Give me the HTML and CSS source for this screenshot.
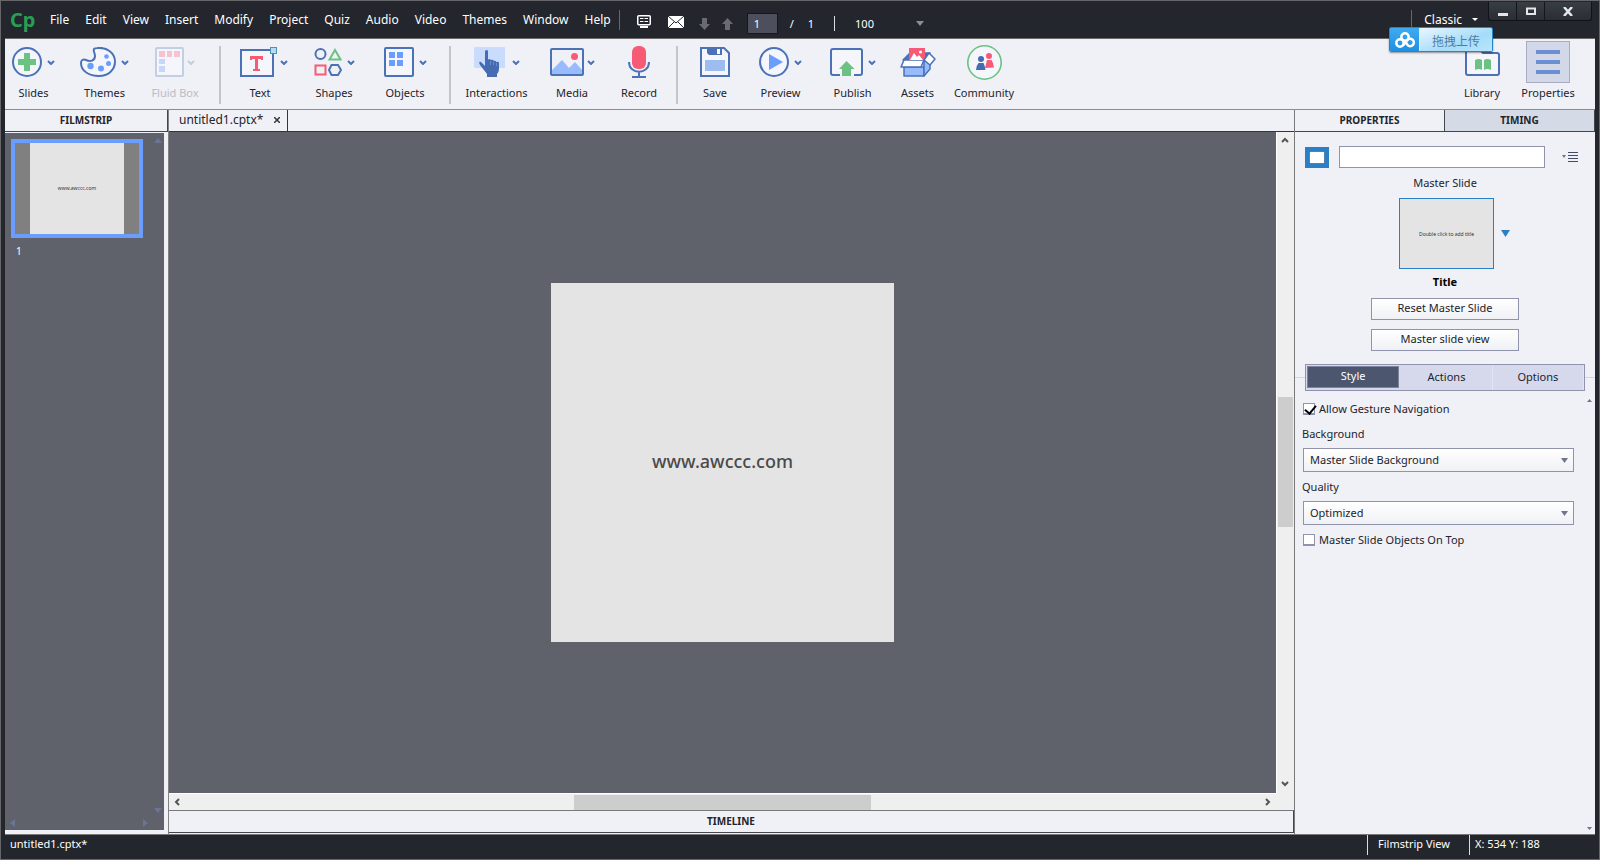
FILE: index.html
```
<!DOCTYPE html>
<html lang="en">
<head>
    <meta charset="UTF-8">
    <meta name="viewport" content="width=device-width, initial-scale=1.0">
    <title>untitled1.cptx</title>
    <link rel="stylesheet" href="styles.css">
</head>
<body>
    <header class="titlebar">
        <span class="logo">Cp</span>
        <nav class="menu">
            <button>File</button>
            <button>Edit</button>
            <button>View</button>
            <button>Insert</button>
            <button>Modify</button>
            <button>Project</button>
            <button>Quiz</button>
            <button>Audio</button>
            <button>Video</button>
            <button>Themes</button>
            <button>Window</button>
            <button>Help</button>
        </nav>
        <span class="bar-line"></span>
        <div class="quick">
            <button class="icon-btn" aria-label="Notes">
                <svg width="14" height="13" viewBox="0 0 14 13"><rect x=".75" y=".75" width="12.500" height="9" rx="1" fill="none" stroke="#fff" stroke-width="1.500"/><path d="M3 3.500h3.500M3 6.500h3.500M7.500 3.500H11M7.500 6.500H11" stroke="#fff"/><path d="M3 11h8v2H3z" fill="#fff"/></svg>
            </button>
            <button class="icon-btn" aria-label="Mail">
                <svg width="16" height="12" viewBox="0 0 16 12"><rect width="16" height="12" fill="#fff"/><path d="M0 0l8 7 8-7M0 12l6-6M16 12l-6-6" fill="none" stroke="#23262d"/></svg>
            </button>
        </div>
        <div class="pager">
            <button class="icon-btn" aria-label="Next slide">
                <svg width="11" height="12" viewBox="0 0 11 12"><path d="M3 0h5v6h3l-5.500 6L0 6h3z" fill="#696b70"/></svg>
            </button>
            <button class="icon-btn" aria-label="Previous slide">
                <svg width="11" height="12" viewBox="0 0 11 12"><path d="M3 12h5V6h3L5.500 0 0 6h3z" fill="#696b70"/></svg>
            </button>
            <input class="page-input" type="text" value="1" aria-label="Slide number">
            <span class="slash">/</span>
            <span class="page-total">1</span>
            <span class="bar-line bright"></span>
            <button class="zoom-btn">100
                <svg width="8" height="5" viewBox="0 0 8 5"><path d="M0 0h8L4 5z" fill="#8b8d92"/></svg>
            </button>
        </div>
        <div class="workspace">
            <span class="bar-line"></span>
            <button class="classic">Classic
                <svg width="6" height="3" viewBox="0 0 6 3"><path d="M0 0h6L3 3z" fill="#fff"/></svg>
            </button>
        </div>
        <div class="window-btns">
            <button aria-label="Minimize"><svg width="10" height="10" viewBox="0 0 10 10"><path d="M0 7h10v3H0z" fill="#e4e6ea"/></svg></button>
            <button aria-label="Maximize"><svg width="10" height="8" viewBox="0 0 10 8"><path d="M1 1.500h8v5.500H1z" fill="none" stroke="#e4e6ea" stroke-width="2"/></svg></button>
            <button class="close" aria-label="Close"><svg width="10" height="9" viewBox="0 0 10 9"><path d="M1 0l8 9M9 0L1 9" stroke="#e4e6ea" stroke-width="2.500"/></svg></button>
        </div>
        <button class="upload">
            <span class="upload-icon">
                <svg width="20" height="16" viewBox="0 0 20 16" fill="none" stroke="#fff" stroke-width="2.500"><circle cx="10" cy="5" r="3.700"/><circle cx="5" cy="11" r="3.700"/><path d="M10 8.500l2.500 4.500a3.700 3.700 0 1 0-.5-4.500L8 13.500"/></svg>
            </span>
            <span class="upload-text">拖拽上传</span>
        </button>
    </header>

    <div class="work">
        <div class="toolbar">
            <div class="tools insert-tools">
                <button class="tool">
                    <span class="tool-icon">
                        <svg width="30" height="30" viewBox="0 0 30 30"><circle cx="15" cy="15" r="14" fill="#f4f6fc" stroke="#4b71b7" stroke-width="2"/><path d="M12 6h6v6h6v6h-6v6h-6v-6H6v-6h6z" fill="#6bc283"/></svg>
                        <svg class="chevron" width="8" height="5" viewBox="0 0 8 5"><path d="M1 1l3 3 3-3"/></svg>
                    </span>
                    Slides
                </button>
                <button class="tool">
                    <span class="tool-icon">
                        <svg width="36" height="30" viewBox="0 0 36 30"><path d="M17 1C27 0 35 6 35 14.500 35 23 28 29 19 29 9 29 1 24 1 16c0-3 2-4 5-3 4 2 9 1 9-4 0-3-2-5-1-7 .5-1 1.500-1 3-1z" fill="#f4f6fc" stroke="#4b71b7" stroke-width="2"/><g fill="#6b9dff"><circle cx="10.500" cy="19" r="3.200"/><circle cx="21" cy="21.500" r="3"/><circle cx="28.500" cy="16.500" r="2.500"/><circle cx="26.500" cy="9.500" r="2.300"/></g></svg>
                        <svg class="chevron" width="8" height="5" viewBox="0 0 8 5"><path d="M1 1l3 3 3-3"/></svg>
                    </span>
                    Themes
                </button>
                <button class="tool" disabled>
                    <span class="tool-icon tight">
                        <svg width="29" height="30" viewBox="0 0 29 30"><rect x="1" y="1" width="27" height="28" rx="1" fill="#f4f6fc" stroke="#c3cde4" stroke-width="2"/><path d="M4 4h6v6H4zM12 4h5v6h-5zM19 4h6v6h-6z" fill="#f6c4d0"/><path d="M4 12h6v5H4zM4 19h6v6H4z" fill="#c6d7fa"/></svg>
                        <svg class="chevron" width="8" height="5" viewBox="0 0 8 5"><path d="M1 1l3 3 3-3"/></svg>
                    </span>
                    Fluid Box
                </button>
            </div>
            <span class="tool-line"></span>
            <div class="tools object-tools">
                <button class="tool">
                    <span class="tool-icon tight">
                        <svg width="44" height="30" viewBox="-7 0 44 30"><path d="M1 3h32v26H1z" fill="#f4f6fc" stroke="#4b71b7" stroke-width="2"/><path d="M10 9h13v4h-2v-1h-3v10h2v2h-7v-2h2V12h-3v1h-2z" fill="#f75a74"/><rect x="30.500" y=".5" width="6" height="6" fill="#b5dcf2" stroke="#5590b5"/></svg>
                        <svg class="chevron" width="8" height="5" viewBox="0 0 8 5"><path d="M1 1l3 3 3-3"/></svg>
                    </span>
                    Text
                </button>
                <button class="tool">
                    <span class="tool-icon">
                        <svg width="28" height="28" viewBox="0 0 28 28" fill="none" stroke="#4b71b7" stroke-width="2"><circle cx="6.500" cy="6" r="5"/><path d="M21 2l5.500 9.500h-11z" stroke="#6bc283"/><path d="M1.500 17.500h10v9h-10z" stroke="#f75a74"/><path d="M17.500 17h6.500l3 5-3 5h-6.500l-2.500-5z"/></svg>
                        <svg class="chevron" width="8" height="5" viewBox="0 0 8 5"><path d="M1 1l3 3 3-3"/></svg>
                    </span>
                    Shapes
                </button>
                <button class="tool">
                    <span class="tool-icon">
                        <svg width="30" height="30" viewBox="0 0 30 30"><rect x="1" y="1" width="28" height="28" rx="1" fill="#f4f6fc" stroke="#4b71b7" stroke-width="2"/><path d="M5 5h6v6H5zM13 5h6v6h-6zM5 13h6v6H5zM13 13h6v6h-6z" fill="#6b9dff"/></svg>
                        <svg class="chevron" width="8" height="5" viewBox="0 0 8 5"><path d="M1 1l3 3 3-3"/></svg>
                    </span>
                    Objects
                </button>
            </div>
            <span class="tool-line"></span>
            <div class="tools media-tools">
                <button class="tool">
                    <span class="tool-icon">
                        <svg width="33" height="30" viewBox="0 0 33 30"><rect width="31" height="21" rx="1" fill="#c9dcfe"/><path d="M11 4q2-2 3 0v9q1-2 3 0 2-1 3 1 2-1 2 1 3-1 3 1v6q0 3-2 5v3H13v-3l-7-9q-2-4 1-3l4 4z" fill="#456bb3"/><path d="M16.500 14v4M19.500 15v3M22.500 16v3" stroke="#7b9bd4" stroke-width=".7"/></svg>
                        <svg class="chevron" width="8" height="5" viewBox="0 0 8 5"><path d="M1 1l3 3 3-3"/></svg>
                    </span>
                    Interactions
                </button>
                <button class="tool">
                    <span class="tool-icon tight">
                        <svg width="34" height="28" viewBox="0 0 34 28"><path d="M2 22l10-10 7 8 6-6 8 9v4H2z" fill="#97bbfc"/><rect x="1" y="1" width="32" height="26" rx="1" fill="none" stroke="#4b71b7" stroke-width="2"/><circle cx="24.500" cy="8.500" r="3.500" fill="#f75a74"/></svg>
                        <svg class="chevron" width="8" height="5" viewBox="0 0 8 5"><path d="M1 1l3 3 3-3"/></svg>
                    </span>
                    Media
                </button>
                <button class="tool">
                    <span class="tool-icon">
                        <svg width="22" height="32" viewBox="0 0 22 32"><rect x="4" width="14" height="23" rx="6" fill="#f75a74"/><path d="M1 16c0 13 20 13 20 0M11 26v5M4 31h14" fill="none" stroke="#4b71b7" stroke-width="2"/></svg>
                    </span>
                    Record
                </button>
            </div>
            <span class="tool-line"></span>
            <div class="tools output-tools">
                <button class="tool">
                    <span class="tool-icon">
                        <svg width="30" height="30" viewBox="0 0 30 30"><path d="M1 1h23l5 5v23H1z" fill="#f4f6fc" stroke="#4b71b7" stroke-width="2"/><path d="M7 1h15v7H9L7 6z" fill="#4b71b7"/><path d="M17 2h3v5h-3z" fill="#fff"/><path d="M5 13h20v11H5z" fill="#9dbcf0"/></svg>
                    </span>
                    Save
                </button>
                <button class="tool">
                    <span class="tool-icon">
                        <svg width="30" height="30" viewBox="0 0 30 30"><circle cx="15" cy="15" r="14" fill="#f4f6fc" stroke="#4b71b7" stroke-width="2"/><path d="M10 7l14 8-14 8z" fill="#6b9dff"/></svg>
                        <svg class="chevron" width="8" height="5" viewBox="0 0 8 5"><path d="M1 1l3 3 3-3"/></svg>
                    </span>
                    Preview
                </button>
                <button class="tool">
                    <span class="tool-icon">
                        <svg width="33" height="28" viewBox="0 0 33 28"><path d="M10 27H3q-2 0-2-2V3q0-2 2-2h27q2 0 2 2v22q0 2-2 2h-6" fill="#f4f6fc" stroke="#4b71b7" stroke-width="2"/><path d="M16.500 13l8 8H21v7h-9v-7H9z" fill="#6bc283"/></svg>
                        <svg class="chevron" width="8" height="5" viewBox="0 0 8 5"><path d="M1 1l3 3 3-3"/></svg>
                    </span>
                    Publish
                </button>
                <button class="tool">
                    <span class="tool-icon">
                        <svg width="36" height="29" viewBox="0 0 36 29"><g stroke="#4b71b7" stroke-width="1.500" stroke-linejoin="round"><path d="M3 12L10 5h20L24 12z" fill="#4b71b7"/><path d="M4 19h20v9H4z" fill="#97bbfc"/><path d="M24 14l6-8v15l-6 7z" fill="#97bbfc"/><path d="M4 12h20l-3 7H1z" fill="#fff"/><path d="M24 12l5-7 6 6-5 6z" fill="#fff"/></g><path d="M9 0h16v9l-2 3H9z" fill="#f75a74"/><path d="M10 12l4-7 3 4 2-2 4 5z" fill="#fff"/><circle cx="20.500" cy="4" r="1.500" fill="#fff"/></svg>
                    </span>
                    Assets
                </button>
                <button class="tool">
                    <span class="tool-icon">
                        <svg width="35" height="35" viewBox="0 0 35 35"><circle cx="17.500" cy="17.500" r="16.700" fill="#f4f6fc" stroke="#6bc283" stroke-width="1.600"/><circle cx="22" cy="11" r="3" fill="#f75a74"/><path d="M20 15h4.500q2 3 2.500 7.500l-9 .5z" fill="#f75a74"/><circle cx="14" cy="14" r="3" fill="#456bb3"/><path d="M11.500 18h5q1.500 3 2 7H9q0-4 2.500-7z" fill="#456bb3"/></svg>
                    </span>
                    Community
                </button>
            </div>
            <div class="tools panel-tools">
                <button class="tool">
                    <span class="tool-icon">
                        <svg width="35" height="28" viewBox="0 0 35 28"><path d="M1 0v25q0 2 2 2h29q2 0 2-2V7q0-2-2-2H18l-4-4H1" fill="#f4f6fc" stroke="#4b71b7" stroke-width="2"/><path d="M10 12q4-2 7 0v10q-3-2-7 0zM19 12q3-2 7 0v10q-4-2-7 0z" fill="#6bc283"/></svg>
                    </span>
                    Library
                </button>
                <button class="tool active">
                    <span class="tool-icon">
                        <svg width="24" height="24" viewBox="0 0 24 24"><path d="M0 0h24v4H0zM0 10h24v4H0zM0 20h24v4H0z" fill="#6b8fd2"/></svg>
                    </span>
                    Properties
                </button>
            </div>
        </div>

        <main class="panels">
            <section class="filmstrip">
                <h2 class="panel-title">FILMSTRIP</h2>
                <div class="film-body">
                    <div class="film-list">
                        <button class="film-thumb"><span class="film-slide">www.awccc.com</span></button>
                        <span class="film-number">1</span>
                    </div>
                    <div class="film-scroll">
                        <svg width="8" height="5" viewBox="0 0 8 5"><path d="M0 5h8L4 0z"/></svg>
                        <svg width="8" height="5" viewBox="0 0 8 5"><path d="M0 0h8L4 5z"/></svg>
                    </div>
                    <div class="film-scroll-x">
                        <svg width="5" height="8" viewBox="0 0 5 8"><path d="M5 0v8L0 4z"/></svg>
                        <svg width="5" height="8" viewBox="0 0 5 8"><path d="M0 0v8l5-4z"/></svg>
                    </div>
                </div>
            </section>

            <section class="document">
                <div class="doc-tabs">
                    <div class="doc-tab">
                        untitled1.cptx*
                        <button class="icon-btn" aria-label="Close tab"><svg width="6" height="6" viewBox="0 0 6 6"><path d="M0 0l6 6M6 0L0 6" stroke="#333" stroke-width="1.500"/></svg></button>
                    </div>
                </div>
                <div class="stage">
                    <div class="canvas">
                        <div class="slide">www.awccc.com</div>
                    </div>
                    <div class="scroll-y">
                        <svg width="8" height="6" viewBox="0 0 8 6"><path d="M1 5l3-3 3 3"/></svg>
                        <span class="track"><span class="thumb"></span></span>
                        <svg width="8" height="6" viewBox="0 0 8 6"><path d="M1 1l3 3 3-3"/></svg>
                    </div>
                    <div class="scroll-x">
                        <svg width="6" height="8" viewBox="0 0 6 8"><path d="M5 1L2 4l3 3"/></svg>
                        <span class="track"><span class="thumb"></span></span>
                        <svg width="6" height="8" viewBox="0 0 6 8"><path d="M1 1l3 3-3 3"/></svg>
                    </div>
                </div>
                <h2 class="timeline">TIMELINE</h2>
            </section>

            <aside class="properties">
                <div class="side-tabs">
                    <button class="side-tab">PROPERTIES</button>
                    <button class="side-tab inactive">TIMING</button>
                </div>
                <div class="name-row">
                    <svg width="24" height="21" viewBox="0 0 24 21"><path d="M0 0h24v21H0z" fill="#2b7fc4"/><path d="M4.500 4.500h15v12h-15z" fill="#fff" stroke="#17466f" stroke-dasharray="1 1"/></svg>
                    <input class="name-input" type="text" aria-label="Slide name">
                    <button class="icon-btn" aria-label="Panel options">
                        <svg width="16" height="11" viewBox="0 0 16 11"><path d="M0 3h4L2 6z" fill="#6f7590"/><path d="M6 .5h10M6 3.500h10M6 6.500h10M6 9.500h10" stroke="#434b66"/></svg>
                    </button>
                </div>
                <div class="master">
                    <p>Master Slide</p>
                    <div class="master-pick">
                        <button class="master-thumb">Double click to add title</button>
                        <button class="icon-btn" aria-label="Choose master slide"><svg width="9" height="7" viewBox="0 0 9 7"><path d="M0 0h9L4.500 7z" fill="#2b7fc4"/></svg></button>
                    </div>
                    <p class="master-name">Title</p>
                    <button class="push">Reset Master Slide</button>
                    <button class="push">Master slide view</button>
                </div>
                <div class="style-tabs">
                    <div class="segments">
                        <button class="selected">Style</button>
                        <button>Actions</button>
                        <button>Options</button>
                    </div>
                </div>
                <div class="options">
                    <svg class="option-arrow" width="5" height="3" viewBox="0 0 5 3"><path d="M0 3h5L2.500 0z"/></svg>
                    <label class="check"><input type="checkbox" checked> Allow Gesture Navigation</label>
                    <label class="field-label" for="background">Background</label>
                    <select id="background">
                        <option>Master Slide Background</option>
                    </select>
                    <label class="field-label" for="quality">Quality</label>
                    <select id="quality">
                        <option>Optimized</option>
                    </select>
                    <label class="check"><input type="checkbox"> Master Slide Objects On Top</label>
                    <svg class="option-arrow last" width="5" height="3" viewBox="0 0 5 3"><path d="M0 0h5L2.500 3z"/></svg>
                </div>
            </aside>
        </main>
    </div>

    <footer class="status">
        <span class="status-file">untitled1.cptx*</span>
        <span class="status-view">Filmstrip View</span>
        <span class="status-pos">X: 534 Y: 188</span>
    </footer>
</body>
</html>
```
FILE: styles.css
```
* {
    box-sizing: border-box;
}
body {
    display: flex;
    flex-direction: column;
    height: 100vh;
    margin: 0;
    border: 1px solid #66666a;
    background-color: #23262d;
    color: #22242b;
    font-family: "Noto Sans", "Open Sans", sans-serif;
    font-size: 11px;
    overflow: hidden;
}
button, input, select {
    font: inherit;
    color: inherit;
}
button {
    padding: 0;
    border: 0;
    background: none;
}
h2, p {
    margin: 0;
}
svg {
    display: block;
    flex: none;
}
.icon-btn {
    display: block;
}

/* title bar */
.titlebar {
    position: relative;
    display: flex;
    align-items: center;
    height: 37px;
    padding: 0 7px 0 9px;
    color: #fff;
    font-size: 12px;
}
.logo {
    width: 40px;
    color: #2a9d55;
    font-size: 20px;
    font-weight: bold;
    line-height: 30px;
}
.menu {
    display: flex;
    gap: 16px;
    margin-right: 8px;
}
.bar-line {
    width: 1px;
    height: 20px;
    background-color: #66686d;
}
.bar-line.bright {
    height: 15px;
    background-color: #dcdde0;
}
.quick {
    display: flex;
    align-items: center;
    gap: 17px;
    margin: 4px 15px 0 17px;
}
.pager {
    display: flex;
    align-items: center;
    gap: 12px;
    margin-top: 8px;
    font-size: 11px;
}
.page-input {
    width: 31px;
    height: 21px;
    margin-left: 2px;
    padding: 0 6px;
    border: 1px solid #15171b;
    background-color: #4d505c;
}
.page-total {
    margin: 0 8px 0 2px;
}
.zoom-btn {
    display: flex;
    align-items: center;
    gap: 42px;
    margin-left: 8px;
}
.workspace {
    display: flex;
    align-items: center;
    gap: 12px;
    margin-left: auto;
}
.classic {
    display: flex;
    align-items: center;
    gap: 10px;
    margin-right: 10px;
}
.window-btns {
    display: flex;
    align-self: flex-start;
    margin-top: 1px;
    border: 1px solid #111317;
    border-top: 0;
    border-radius: 0 0 3px 3px;
    background-image: linear-gradient(#393d44, #2a2d34);
}
.window-btns button {
    display: flex;
    align-items: center;
    justify-content: center;
    width: 28px;
    height: 18px;
    border-right: 1px solid #14161a;
}
.window-btns .close {
    width: 46px;
    border-right: 0;
}
.upload {
    position: absolute;
    top: 26px;
    right: 106px;
    z-index: 2;
    display: flex;
    width: 104px;
    height: 25px;
    border: 1px solid #2088c8;
    border-radius: 2px;
    box-shadow: 0 1px 2px rgba(0, 0, 0, 0.4);
    overflow: hidden;
}
.upload-icon {
    display: flex;
    align-items: center;
    justify-content: center;
    width: 29px;
    height: 23px;
    background-image: linear-gradient(#3fabf2, #1e90e2);
}
.upload-text {
    flex: 1;
    border-left: 1px solid #d8effc;
    background-image: linear-gradient(160deg, #eaf6fe, #a5dcfa 60%, #b8e5fc);
    color: #4f7d9e;
    font-family: "Noto Sans CJK SC", sans-serif;
    font-size: 12px;
    line-height: 25px;
}

/* toolbar */
.work {
    display: flex;
    flex-direction: column;
    flex: 1;
    min-height: 0;
    margin: 0 4px;
    border-top: 1px solid #6b6a68;
    border-bottom: 1px solid #77777a;
    background-color: #f0f1f7;
}
.toolbar {
    display: flex;
    height: 71px;
    border-bottom: 1px solid #8a8c90;
}
.tools {
    display: grid;
    align-items: start;
}
.insert-tools {
    grid-template-columns: 57px 85px 56px;
    padding-right: 1px;
}
.object-tools {
    grid-template-columns: 48px 100px 42px;
    padding-right: 8px;
}
.media-tools {
    grid-template-columns: 61px 90px 44px;
}
.output-tools {
    grid-template-columns: 44px 87px 57px 73px 60px;
}
.panel-tools {
    grid-template-columns: 68px 64px;
    margin-left: auto;
    padding-right: 15px;
}
.tool {
    display: flex;
    flex-direction: column;
    align-items: center;
    line-height: 16px;
    white-space: nowrap;
}
.tool-icon {
    display: flex;
    align-items: center;
    justify-content: center;
    gap: 5px;
    width: 44px;
    height: 42px;
    margin: 2px 0;
}
.tool-icon.tight {
    gap: 3px;
}
.chevron {
    fill: none;
    stroke: #4b71b7;
    stroke-width: 2;
}
.tool:disabled {
    color: #b9bbc5;
}
.tool:disabled .chevron {
    stroke: #c3cde4;
}
.tool.active .tool-icon {
    border: 1px solid #a9adc3;
    background-color: #d3d8e8;
}
.tool-line {
    width: 2px;
    height: 58px;
    margin: 7px 15px 0;
    background-color: #c4c5cb;
}

/* filmstrip */
.panels {
    display: flex;
    flex: 1;
    min-height: 0;
}
.filmstrip {
    display: flex;
    flex-direction: column;
    width: 164px;
    border-right: 1px solid #808285;
}
.panel-title {
    height: 22px;
    border-right: 1px solid #444649;
    border-bottom: 1px solid #444649;
    font-size: 10px;
    line-height: 20px;
    text-align: center;
}
.film-body {
    display: grid;
    grid-template-columns: 1fr 10px;
    grid-template-rows: 1fr 13px;
    flex: 1;
    margin: 1px 4px 4px 0;
    background-color: #5f626b;
}
.film-list {
    padding: 6px;
    color: #fff;
    font-size: 10px;
}
.film-thumb {
    display: flex;
    justify-content: center;
    width: 132px;
    height: 99px;
    margin-bottom: 6px;
    border: 4px solid #6b9dff;
    background-color: #808080;
}
.film-slide {
    width: 94px;
    height: 91px;
    background-color: #e4e4e4;
    color: #333;
    font-size: 5px;
    line-height: 91px;
}
.film-number {
    padding-left: 5px;
}
.film-scroll, .film-scroll-x {
    display: flex;
    justify-content: space-between;
    fill: #6b7494;
}
.film-scroll {
    flex-direction: column;
    padding: 5px 0 4px;
}
.film-scroll-x {
    padding: 2px 6px 0 5px;
}

/* document */
.document {
    display: flex;
    flex-direction: column;
    flex: 1;
    min-width: 0;
}
.doc-tabs {
    height: 22px;
    border-bottom: 1px solid #333538;
}
.doc-tab {
    display: flex;
    align-items: center;
    justify-content: space-between;
    width: 119px;
    height: 21px;
    padding: 0 7px 2px 10px;
    border-right: 1px solid #333538;
    font-size: 12px;
}
.stage {
    display: grid;
    grid-template-columns: 1fr 18px;
    grid-template-rows: 1fr 17px;
    flex: 1;
    background-color: #efefef;
}
.canvas {
    display: flex;
    align-items: center;
    justify-content: center;
    background-color: #5f626b;
}
.slide {
    width: 343px;
    height: 359px;
    background-color: #e4e4e4;
    color: #4a4a4a;
    font-size: 18px;
    font-weight: 500;
    line-height: 356px;
    text-align: center;
}
.scroll-y, .scroll-x {
    display: flex;
    align-items: center;
    fill: none;
    stroke: #555;
    stroke-width: 2;
}
.scroll-y {
    flex-direction: column;
    padding: 5px 1px 6px 0;
    border-left: 1px solid #fff;
}
.scroll-x {
    padding: 0 5px 0 5px;
    border-top: 1px solid #fff;
}
.scroll-y svg, .scroll-x svg {
    overflow: visible;
}
.track {
    display: flex;
    justify-content: center;
    flex: 1;
}
.scroll-y .track {
    align-items: center;
    width: 16px;
}
.thumb {
    width: 297px;
    height: 15px;
    background-color: #cdcdcd;
}
.scroll-y .thumb {
    width: 15px;
    height: 130px;
}
.timeline {
    height: 23px;
    margin-bottom: 1px;
    border-top: 1px solid #77797d;
    border-right: 1px solid #444649;
    border-bottom: 1px solid #444649;
    font-size: 10px;
    line-height: 21px;
    text-align: center;
}

/* properties */
.properties {
    display: flex;
    flex-direction: column;
    width: 301px;
    border-left: 1px solid #77797d;
}
.side-tabs {
    display: flex;
    height: 22px;
    border-bottom: 1px solid #444649;
}
.side-tab {
    flex: 1;
    padding-bottom: 1px;
    font-size: 10px;
    font-weight: bold;
}
.side-tab.inactive {
    border-left: 1px solid #444649;
    border-right: 1px solid #444649;
    background-color: #d5dbe6;
}
.name-row {
    display: flex;
    align-items: center;
    padding: 14px 17px 0 10px;
}
.name-input {
    flex: 1;
    min-width: 0;
    height: 22px;
    margin: 0 17px 0 10px;
    border: 1px solid #8f94ac;
    background-color: #fff;
}
.master {
    display: flex;
    flex-direction: column;
    align-items: center;
    padding-top: 7px;
    line-height: 16px;
}
.master-pick {
    display: flex;
    align-items: center;
    gap: 7px;
    margin: 7px 0 5px;
    padding-left: 19px;
}
.master-thumb {
    width: 95px;
    height: 71px;
    border: 1px solid #2b7fc4;
    background-color: #e4e4e4;
    color: #333;
    font-size: 5px;
}
.master-name {
    margin-bottom: 8px;
    color: #000;
    font-weight: bold;
}
.push {
    width: 148px;
    height: 22px;
    margin-bottom: 9px;
    padding-bottom: 2px;
    border: 1px solid #8f94ac;
    background-image: linear-gradient(#fff, #f0f1f5);
}
.style-tabs {
    padding: 4px 10px 0;
    background: linear-gradient(#d5d6dc, #d5d6dc) 0 17px / 100% 1px no-repeat;
}
.segments {
    display: flex;
    height: 27px;
    border: 1px solid #8f94ac;
    background-color: #d5d9eb;
}
.segments button {
    flex: 1;
    padding-bottom: 2px;
    border-right: 1px solid #e2e5f1;
}
.segments .selected {
    margin: 1px 2px 2px 1px;
    padding-bottom: 4px;
    border: 1px solid #7d849c;
    background-color: #4d566f;
    color: #fff;
}
.options {
    position: relative;
    display: flex;
    flex-direction: column;
    flex: 1;
    padding: 8px 21px 0 7px;
}
.option-arrow {
    position: absolute;
    top: 8px;
    right: 3px;
    fill: #6f7590;
}
.option-arrow.last {
    top: auto;
    bottom: 4px;
}
.check {
    display: flex;
    align-items: center;
    gap: 4px;
    height: 18px;
}
.check input {
    appearance: none;
    width: 12px;
    height: 12px;
    margin: 1px 0 0 1px;
    border: 1px solid #8f94ac;
    border-bottom-width: 2px;
    background-color: #fff;
}
.check input:checked::before {
    content: "";
    display: block;
    width: 5px;
    height: 9px;
    margin: -1px 0 0 3px;
    border: solid #000;
    border-width: 0 2px 2px 0;
    transform: rotate(40deg);
}
.field-label {
    margin-top: 8px;
    line-height: 18px;
}
select {
    appearance: none;
    height: 24px;
    margin: 5px 0 0 1px;
    padding: 0 6px 2px;
    border: 1px solid #8f94ac;
    border-radius: 0;
    background: url("data:image/svg+xml,%3Csvg xmlns='http://www.w3.org/2000/svg' width='7' height='5'%3E%3Cpath d='M0 0h7L3.500 5z' fill='%236f7590'/%3E%3C/svg%3E") right 5px center no-repeat, linear-gradient(#fff, #f0f1f5);
}
select + .field-label {
    margin-top: 6px;
}
select + .check {
    margin-top: 5px;
}

/* status bar */
.status {
    display: flex;
    height: 24px;
    padding: 0 9px;
    color: #fff;
    line-height: 18px;
}
.status-file {
    flex: 1;
}
.status-view, .status-pos {
    width: 102px;
    height: 20px;
    padding-left: 10px;
    border-left: 1px solid #dcdde0;
}
.status-pos {
    width: 121px;
    padding-left: 5px;
}
```
